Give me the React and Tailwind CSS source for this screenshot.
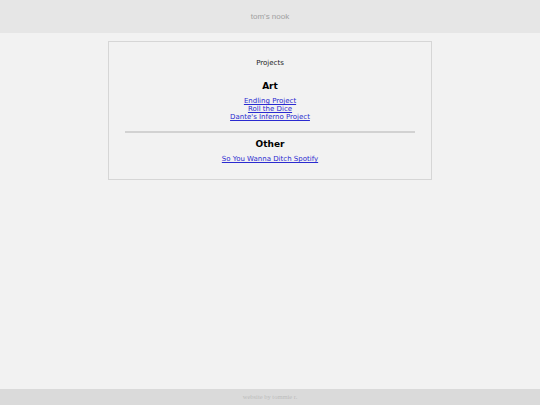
export default function App() {
  return (
    <div className="min-h-[405px] flex flex-col bg-[#f2f2f2] font-['DejaVu_Sans',sans-serif]">
      <header className="h-[33px] bg-[#e6e6e6] flex items-center justify-center">
        <span className="text-[8px] text-[#a0a0a0] font-['Liberation_Sans',sans-serif]">tom's nook</span>
      </header>

      <main className="flex-1 pt-2">
        <div className="mx-auto w-[324px] border border-[#d6d6d6] text-center pt-[17px] pb-[16px] px-4">
          <p className="text-[7px] text-[#222] leading-[9px]">Projects</p>

          <h2 className="mt-[13px] text-[9px] font-bold text-black leading-[11px]">Art</h2>
          <div className="mt-[5px] flex flex-col items-center text-[7px] leading-[8px]">
            <a href="#" className="text-[#2a2ad0] underline">Endling Project</a>
            <a href="#" className="text-[#2a2ad0] underline">Roll the Dice</a>
            <a href="#" className="text-[#2a2ad0] underline">Dante's Inferno Project</a>
          </div>

          <hr className="mt-[10px] mx-0 border-0 border-t-2 border-[#d2d2d2]" />

          <h2 className="mt-[6px] text-[9px] font-bold text-black leading-[11px]">Other</h2>
          <div className="mt-[5px] flex flex-col items-center text-[7px] leading-[8px]">
            <a href="#" className="text-[#2a2ad0] underline">So You Wanna Ditch Spotify</a>
          </div>
        </div>
      </main>

      <footer className="h-[16px] bg-[#dadada] flex items-center justify-center">
        <span className="text-[6.5px] text-[#bdbdbd] font-['Liberation_Serif',serif]">website by tommie r.</span>
      </footer>
    </div>
  );
}
